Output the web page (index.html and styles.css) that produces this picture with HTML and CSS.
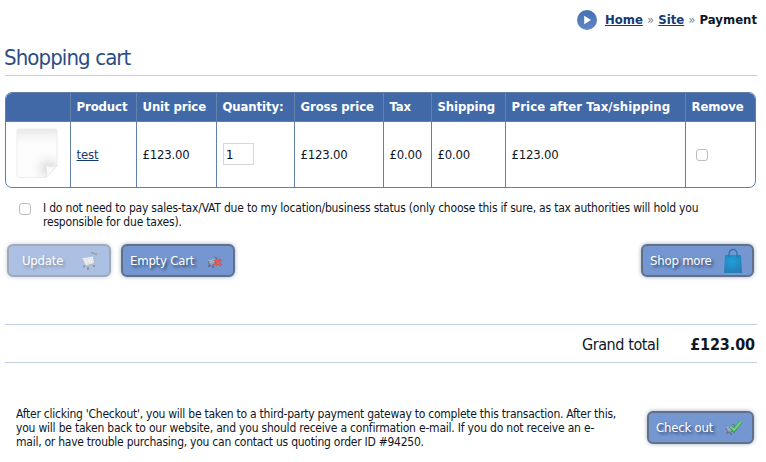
FILE: index.html
```
<!DOCTYPE html>
<html lang="en">
<head>
<meta charset="utf-8">
<title>Shopping cart</title>
<link rel="stylesheet" href="styles.css">
</head>
<body>
<nav class="crumbs">
  <svg class="crumb-icon" width="20" height="20" viewBox="0 0 20 20"><defs><linearGradient id="disc" x2="0" y2="1"><stop stop-color="#426fb3"/><stop offset="1" stop-color="#6288c5"/></linearGradient></defs><circle cx="10" cy="10" r="10" fill="url(#disc)"/><path d="M7.2 5.8 14 10l-6.800 4.200z" fill="#fff"/></svg>
  <a href="#" class="home">Home</a><span class="sep">»</span><a href="#" class="site">Site</a><span class="sep">»</span><b class="current">Payment</b>
</nav>
<h1><span>Shopping cart</span></h1>
<table class="cart">
  <colgroup><col class="c1"><col class="c2"><col class="c3"><col class="c4"><col class="c5"><col class="c6"><col class="c7"><col class="c8"><col class="c9"></colgroup>
  <thead><tr><th></th><th>Product</th><th>Unit price</th><th>Quantity:</th><th>Gross price</th><th>Tax</th><th>Shipping</th><th class="after">Price after Tax/shipping</th><th>Remove</th></tr></thead>
  <tbody><tr>
    <td class="thumb"><svg width="44" height="52" viewBox="0 0 44 52"><defs><linearGradient id="paper" x2="0" y2="1"><stop stop-color="#e7e7e7"/><stop offset=".12" stop-color="#f2f2f2"/><stop offset=".3" stop-color="#fcfcfc"/><stop offset="1" stop-color="#fdfdfd"/></linearGradient><radialGradient id="shade" gradientUnits="userSpaceOnUse" cx="34" cy="41" r="17"><stop stop-color="#d6d6d6"/><stop offset="1" stop-color="#eee" stop-opacity="0"/></radialGradient></defs><path d="M4 1h36q2 0 2 2V38L31 49.500H4q-2 0-2-2v-44.500q0-2 2-2z" fill="url(#paper)" stroke="#ececec"/><path d="M4 2h36q1.500 0 1.500 2V38L31 49H4z" fill="url(#shade)"/><path d="M31 49.500c1-3 1-7-.2-12 4 1.500 8 1.500 11.200 0Z" fill="#fafafa" stroke="#e5e5e5" stroke-width=".7"/></svg></td>
    <td><a href="#" class="product">test</a></td><td>£123.00</td><td class="qty"><input type="text" value="1"></td><td>£123.00</td><td>£0.00</td><td>£0.00</td><td>£123.00</td><td><input type="checkbox" class="check"></td>
  </tr></tbody>
</table>
<label class="exempt"><input type="checkbox" class="check"><span>I do not need to pay sales-tax/VAT due to my location/business status (only choose this if sure, as tax authorities will hold you<br>responsible for due taxes).</span></label>
<div class="actions">
  <button class="btn update" disabled><span>Update</span><svg width="20" height="20" viewBox="0 0 20 20" fill="none"><path d="M2 8 13 6l1 6-9 3z" fill="#c3c9d2"/><path d="m2 8 11-2M3 10l10-2M4 12l10-2M5 7l2 7M8 7l2 6M11 6l1 7" stroke="#eef0f3" stroke-width=".8"/><path d="m12 2 5 1.500-3 9.500-8 2.500-4-7.500" stroke="#858b97"/><path d="m11 1.500 6 2" stroke="#5c626c" stroke-width="1.600"/><path d="M4 14.500v2M8 16v3M14 14v2" stroke="#4d4d4d" stroke-width="1.800"/></svg></button>
  <button class="btn empty"><span>Empty Cart</span><svg width="20" height="20" viewBox="0 0 20 20" fill="none"><g transform="translate(2 1)"><path d="M2 9 9 7l1 5-5 2z" fill="#8c9bb0"/><path d="m2 9 7-2M3 11l6-2M5 8l2 5" stroke="#b5bfcc" stroke-width=".7"/><path d="m8 5 3 1-2 6-5 2-2-5" stroke="#65758e"/><path d="M3 13v2M7 14v2" stroke="#58606d" stroke-width="1.400"/></g><path d="m11 8.500 6 6m0-6-6 6" stroke="#94536b" stroke-width="3"/><path d="m11 8.500 6 6m0-6-6 6" stroke="#f05b56" stroke-width="2"/></svg></button>
  <button class="btn shop"><span>Shop more</span><svg width="20" height="26" viewBox="0 0 20 26"><defs><radialGradient id="bag" cx=".45" cy=".35" r=".65"><stop stop-color="#219fda"/><stop offset="1" stop-color="#247fb6"/></radialGradient></defs><path d="M2 7h16l1 18H1z" fill="url(#bag)"/><path d="M6 9V5.500a4 4 0 0 1 8 0V9" fill="none" stroke="#2079ad" stroke-width="1.300"/></svg></button>
</div>
<div class="total"><span class="total-label">Grand total</span><b class="amount">£123.00</b></div>
<div class="checkout">
  <p>After clicking 'Checkout', you will be taken to a third-party payment gateway to complete this transaction. After this,<br><span class="wide">you will be taken back to our website, and you should receive a confirmation e-mail. If you do not receive an e-</span><br>mail, or have trouble purchasing, you can contact us quoting order ID #94250.</p>
  <button class="btn pay"><span>Check out</span><svg width="20" height="20" viewBox="0 0 20 20" fill="none"><g transform="translate(1 1)"><path d="M2 9 9 7l1 5-5 2z" fill="#8c9bb0"/><path d="m2 9 7-2M3 11l6-2M5 8l2 5" stroke="#b5bfcc" stroke-width=".7"/><path d="m8 5 3 1-2 6-5 2-2-5" stroke="#65758e"/><path d="M3 13v2M7 14v2" stroke="#6c7077" stroke-width="1.400"/></g><path d="m7 8 4 4.500 7-9" stroke="#45836d" stroke-width="3.600"/><path d="m7 8 4 4 7-8.500" stroke="#61d873" stroke-width="2.400"/></svg></button>
</div>
</body>
</html>
```

FILE: styles.css
```
* { box-sizing: border-box; }
body { margin: 0; padding: 9px 9px 0 5px; width: 766px; height: 462px; overflow: hidden; background: #fff; color: #0e1726; font: 13px/16px "DejaVu Sans Condensed", "DejaVu Sans", sans-serif; font-stretch: condensed; white-space: nowrap; }
a { color: #153a72; text-decoration: underline; }
.crumbs { height: 21px; display: flex; align-items: center; justify-content: flex-end; font-weight: bold; }
.crumb-icon { margin-right: 8px; }
.sep { width: 15.4px; text-align: center; color: #7d8796; font-weight: normal; }
h1 { margin: 12px 0 16px; height: 34px; border-bottom: 1px solid #c3cde0; color: #2c4e86; font-size: 22px; line-height: 32px; font-weight: normal; letter-spacing: -.9px; }
h1 span { margin-left: -1px; }
.cart { width: 751px; height: 96px; table-layout: fixed; border-collapse: separate; border-spacing: 0; border: 1px solid #617fa8; border-radius: 7px; overflow: hidden; }
.c1 { width: 65px; } .c2 { width: 66px; } .c3 { width: 80px; } .c4 { width: 78px; } .c5 { width: 89px; } .c6 { width: 48px; } .c7 { width: 74px; } .c8 { width: 180px; }
th, td { padding: 0 0 0 5.5px; text-align: left; vertical-align: middle; border-right: 1px solid #617fa8; }
th:last-child, td:last-child { border-right: 0; }
th { height: 29px; background: #4169a8; color: #fff; border-bottom: 1px solid #617fa8; letter-spacing: -.1px; border-right-color: #6883a9; }
th.after { letter-spacing: .1px; }
td { height: 65px; letter-spacing: -.2px; }
td.thumb { padding: 0 0 2px 9px; }
.product { letter-spacing: -.1px; }
svg { display: block; flex: none; }
td.qty input { display: block; width: 31px; height: 22px; margin: 0 0 1px .5px; padding: 0 2px; border: 1px solid #d8d8d8; font: inherit; color: #000; }
.check { appearance: none; display: block; flex: none; width: 12px; height: 12px; margin: 0 0 0 4px; border: 1px solid #bdbdbd; border-radius: 3px; background: #fff; }
.exempt { display: flex; margin: 13px 0 0 10px; font-size: 12px; line-height: 14px; letter-spacing: -.2px; height: 28px; }
.exempt .check { margin: 2px 12px 0 4px; }
.actions { display: flex; margin: 15px 0 0 2px; height: 33px; }
.btn { display: flex; align-items: center; justify-content: space-between; height: 33px; padding: 0 9px 0 7px; border: 2px solid #637187; border-radius: 6px; background: #7497d1; color: #fff; font: inherit; letter-spacing: -.2px; text-shadow: 2px 2px 3px #273a5c; box-shadow: 0 0 4px #9eacc5; }
.update { width: 104px; padding-left: 13px; opacity: .6; }
.empty { width: 114px; margin-left: 10px; }
.shop { width: 113px; margin: 0 3px 0 auto; }
.total { display: flex; align-items: center; justify-content: flex-end; height: 39px; margin-top: 47px; padding: 2px 2px 0 0; border: solid #c3cde0; border-width: 1px 0; font-size: 16px; }
.total-label { letter-spacing: -.4px; margin-right: 31px; }
.amount { letter-spacing: -.1px; }
.checkout { display: flex; justify-content: space-between; margin: 44px 3px 0 11px; font-size: 12px; line-height: 14px; letter-spacing: -.25px; }
.checkout p { margin: 0; }
.wide { letter-spacing: -.21px; }
.pay { width: 107px; margin-top: 4px; font-size: 13px; }
```
